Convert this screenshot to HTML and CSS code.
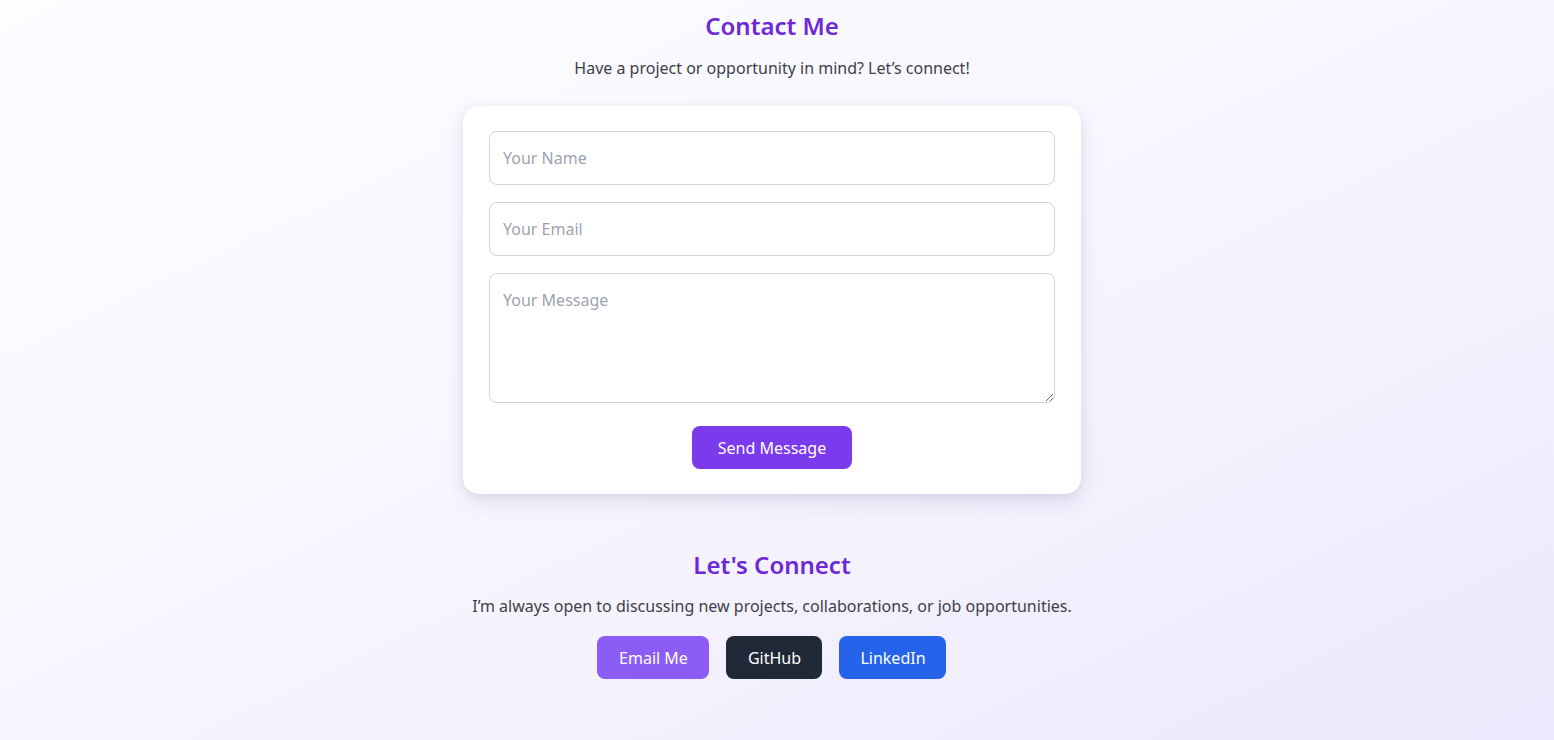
FILE: index.html
```html
<!DOCTYPE html>
<html lang="en">
<head>
<meta charset="utf-8">
<title>Contact Me</title>
<link rel="stylesheet" href="styles.css">
</head>
<body>
<main class="page">
  <section class="contact">
    <h2 class="title">Contact Me</h2>
    <p class="lead">Have a project or opportunity in mind? Let’s connect!</p>
    <form class="card">
      <input class="field" type="text" placeholder="Your Name">
      <input class="field" type="email" placeholder="Your Email">
      <textarea class="field area" placeholder="Your Message"></textarea>
      <div class="actions">
        <button class="btn btn-send" type="button">Send Message</button>
      </div>
    </form>
  </section>
  <section class="connect">
    <h2 class="title">Let's Connect</h2>
    <p class="lead">I’m always open to discussing new projects, collaborations, or job opportunities.</p>
    <div class="links">
      <a class="btn btn-email" href="#">Email Me</a>
      <a class="btn btn-github" href="#">GitHub</a>
      <a class="btn btn-linkedin" href="#">LinkedIn</a>
    </div>
  </section>
</main>
</body>
</html>
```
FILE: styles.css
```css
* { box-sizing: border-box; }
html, body { height: 100%; }
body {
  margin: 0;
  font-family: "Noto Sans", "Open Sans", sans-serif;
  color: #374151;
  background: linear-gradient(to bottom right, #fbfdff 0%, #f7f6fe 50%, #ece8fd 100%);
  min-height: 740px;
}
.page {
  display: flex;
  flex-direction: column;
  align-items: center;
  padding-right: 10px;
}
.contact, .connect {
  display: flex;
  flex-direction: column;
  align-items: center;
}
.title {
  margin: 0;
  font-size: 24px;
  font-weight: 600;
  color: #6d28d9;
  line-height: 34px;
}
.contact .title { margin-top: 9px; }
.lead {
  margin: 0;
  font-size: 16px;
  line-height: 24px;
  color: #3f3f46;
}
.contact .lead { margin-top: 13px; }
.card {
  margin-top: 26px;
  width: 618px;
  background: #fff;
  border-radius: 16px;
  box-shadow: 0 8px 20px rgba(60, 50, 110, 0.12), 0 2px 6px rgba(60, 50, 110, 0.06);
  padding: 25px 26px 25px 26px;
  display: flex;
  flex-direction: column;
  gap: 17px;
}
.field {
  display: block;
  width: 100%;
  height: 54px;
  border: 1px solid #d1d5db;
  border-radius: 8px;
  padding: 0 13px;
  font-family: inherit;
  font-size: 16px;
  color: #374151;
  background: #fff;
  outline: none;
}
.field::placeholder { color: #9ca3af; }
.area {
  height: 130px;
  padding: 14px 13px;
  line-height: 24px;
  resize: vertical;
}
.actions {
  display: flex;
  justify-content: center;
  margin-top: 6px;
}
.btn {
  display: inline-flex;
  align-items: center;
  justify-content: center;
  height: 43px;
  padding: 0 20px;
  border: none;
  border-radius: 8px;
  font-family: inherit;
  font-size: 16px;
  color: #fff;
  text-decoration: none;
  cursor: pointer;
}
.btn-send { width: 160px; background: #7c3aed; }
.connect { margin-top: 54px; }
.connect .lead { margin-top: 12px; }
.links {
  display: flex;
  gap: 17px;
  margin-top: 18px;
}
.btn-email { width: 112px; background: #8b5cf6; }
.btn-github { width: 96px; background: #1f2937; }
.btn-linkedin { width: 107px; background: #2563eb; }
```
